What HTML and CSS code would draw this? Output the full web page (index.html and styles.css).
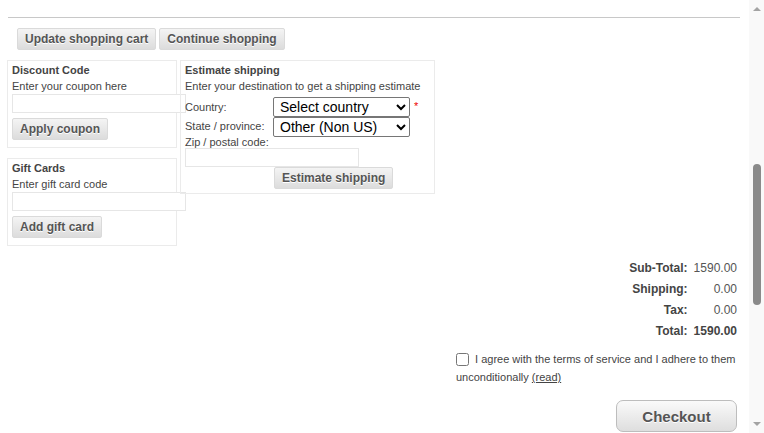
FILE: index.html
```html
<!DOCTYPE html>
<html>
<head>
<meta charset="utf-8">
<link rel="stylesheet" href="styles.css">
</head>
<body>
<div class="page">
  <div class="main">
    <hr class="rule">
    <div class="cart-buttons">
      <button class="btn">Update shopping cart</button>
      <button class="btn">Continue shopping</button>
    </div>
    <div class="blocks">
      <div class="left-col">
        <div class="box box-small">
          <div class="box-title">Discount Code</div>
          <div class="box-desc">Enter your coupon here</div>
          <input class="text-input" type="text">
          <button class="btn btn-block">Apply coupon</button>
        </div>
        <div class="box box-small">
          <div class="box-title">Gift Cards</div>
          <div class="box-desc">Enter gift card code</div>
          <input class="text-input" type="text">
          <button class="btn btn-block">Add gift card</button>
        </div>
      </div>
      <div class="box box-ship">
        <div class="box-title">Estimate shipping</div>
        <div class="box-desc">Enter your destination to get a shipping estimate</div>
        <div class="ship-row first">
          <span class="ship-label">Country:</span>
          <select class="sel"><option>Select country</option></select>
          <span class="req">*</span>
        </div>
        <div class="ship-row">
          <span class="ship-label">State / province:</span>
          <select class="sel"><option>Other (Non US)</option></select>
        </div>
        <div class="zip-label">Zip / postal code:</div>
        <input class="text-input" type="text">
        <div class="ship-btn-row">
          <button class="btn">Estimate shipping</button>
        </div>
      </div>
    </div>
    <div class="totals-wrap">
      <table class="totals">
        <tr><td class="t-label">Sub-Total:</td><td class="t-value">1590.00</td></tr>
        <tr><td class="t-label">Shipping:</td><td class="t-value">0.00</td></tr>
        <tr><td class="t-label">Tax:</td><td class="t-value">0.00</td></tr>
        <tr><td class="t-label">Total:</td><td class="t-value t-strong">1590.00</td></tr>
      </table>
    </div>
    <div class="terms-wrap">
      <div class="terms">
        <input type="checkbox" class="chk"> I agree with the terms of service and I adhere to them unconditionally <a href="#" class="read">(read)</a>
      </div>
    </div>
    <div class="checkout-wrap">
      <button class="checkout">Checkout</button>
    </div>
  </div>
  <div class="scrollbar">
    <span class="arrow up"></span>
    <span class="track"><span class="thumb"></span></span>
    <span class="arrow down"></span>
  </div>
</div>
</body>
</html>
```
FILE: styles.css
```css
html, body {
  margin: 0;
  padding: 0;
  background: #fff;
}
body {
  font-family: "Liberation Sans", Arial, sans-serif;
  font-size: 11px;
  color: #444;
}
.page {
  display: flex;
  width: 764px;
  height: 433px;
  overflow: hidden;
}
.main {
  width: 749px;
  flex: none;
  padding: 0 9px 0 8px;
  box-sizing: border-box;
}
.rule {
  border: 0;
  border-top: 1px solid #c8c8c8;
  margin: 17px 0 0 0;
  height: 0;
}
.cart-buttons {
  display: flex;
  gap: 3px;
  margin: 10px 0 0 9px;
}
.btn {
  font-family: "Liberation Sans", Arial, sans-serif;
  font-size: 12px;
  font-weight: bold;
  color: #555;
  height: 22px;
  padding: 0 7px;
  border: 1px solid #dadada;
  border-radius: 2px;
  background: linear-gradient(#f4f4f4, #dcdcdc);
  text-shadow: 0 1px 0 #fff;
  box-sizing: border-box;
  cursor: pointer;
}
.blocks {
  display: flex;
  align-items: flex-start;
  gap: 3px;
  margin: 10px 0 0 -1px;
}
.left-col {
  display: flex;
  flex-direction: column;
  gap: 10px;
}
.box {
  border: 1px solid #ebebeb;
  padding: 0 4px 7px 4px;
  box-sizing: border-box;
}
.box-small {
  width: 170px;
}
.box-ship {
  width: 255px;
  padding-bottom: 4px;
}
.box-title {
  font-weight: bold;
  line-height: 18px;
}
.box-desc {
  line-height: 15px;
}
.text-input {
  display: block;
  width: 174px;
  height: 19px;
  margin: 0;
  padding: 0;
  border: 1px solid #e6e6e6;
  box-sizing: border-box;
  background: #fff;
}
.btn-block {
  display: block;
  margin-top: 5px;
}
.ship-row {
  display: flex;
  align-items: center;
  height: 19px;
}
.ship-row.first {
  margin-top: 3px;
  height: 20px;
}
.ship-label {
  width: 88px;
  flex: none;
  margin-top: -1px;
}
.sel {
  width: 137px;
  height: 20px;
  font-family: "Liberation Sans", Arial, sans-serif;
  font-size: 14px;
  color: #000;
  border: 1px solid #767676;
  border-radius: 2px;
  background: #fff;
  padding: 0 2px;
  box-sizing: border-box;
}
.req {
  color: #e00;
  margin-left: 4px;
  align-self: flex-start;
  line-height: 12px;
  margin-top: 3px;
}
.zip-label {
  line-height: 12px;
  margin-top: 0;
}
.ship-btn-row {
  padding-left: 89px;
  margin-top: 0;
}
.totals-wrap {
  display: flex;
  justify-content: flex-end;
  margin-top: 12px;
  padding-right: 3px;
}
.totals {
  border-collapse: collapse;
  font-size: 12px;
}
.totals td {
  padding: 0;
  height: 21px;
  line-height: 21px;
  text-align: right;
}
.t-label {
  font-weight: bold;
  color: #444;
  padding-right: 6px !important;
}
.t-value {
  color: #555;
  min-width: 43px;
}
.t-strong {
  font-weight: bold;
  color: #444;
}
.terms-wrap {
  display: flex;
  justify-content: flex-end;
  margin-top: 8px;
}
.terms {
  width: 284px;
  line-height: 18px;
}
.chk {
  width: 13px;
  height: 13px;
  margin: 0 3px 0 0;
  vertical-align: -3px;
}
.read {
  color: #444;
  text-decoration: underline;
}
.checkout-wrap {
  display: flex;
  justify-content: flex-end;
  margin-top: 14px;
  padding-right: 3px;
}
.checkout {
  width: 121px;
  height: 32px;
  font-family: "Liberation Sans", Arial, sans-serif;
  font-size: 15px;
  font-weight: bold;
  color: #555;
  border: 1px solid #bdbdbd;
  border-radius: 7px;
  background: linear-gradient(#fafafa, #dedede);
  text-shadow: 0 1px 0 #fff;
  cursor: pointer;
}
.scrollbar {
  width: 15px;
  flex: none;
  background: #f9f9f9;
  display: flex;
  flex-direction: column;
  align-items: center;
}
.arrow {
  width: 0;
  height: 0;
  border-left: 4px solid transparent;
  border-right: 4px solid transparent;
  flex: none;
}
.arrow.up {
  border-bottom: 4px solid #a3a3a3;
  margin-top: 7px;
}
.arrow.down {
  border-top: 4px solid #a3a3a3;
  margin-bottom: 7px;
}
.track {
  flex: 1;
  display: flex;
  flex-direction: column;
  padding-top: 153px;
}
.thumb {
  display: block;
  width: 8px;
  height: 141px;
  border-radius: 4px;
  background: #8a8a8a;
}
```
